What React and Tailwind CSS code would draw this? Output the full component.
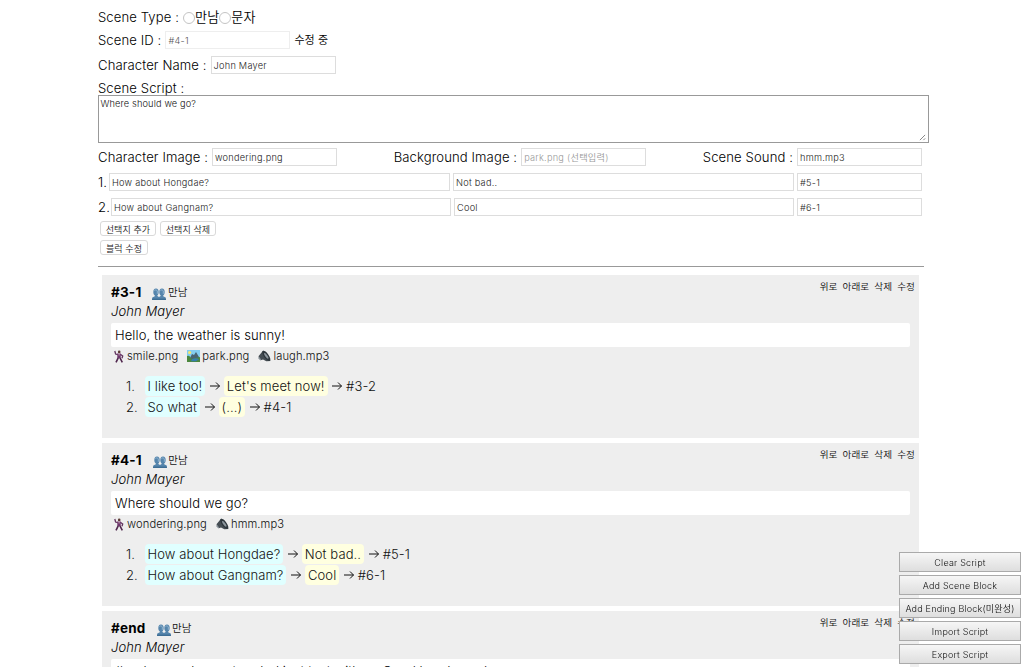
const F = "font-['Inter','Noto_Sans_CJK_KR',sans-serif]";

function Field({ value, className = 'w-[125px]', tone = 'text-[#222] border-[#ddd]' }) {
  return (
    <span className={`flex h-[18px] shrink-0 items-center whitespace-nowrap border bg-white px-[2px] pt-[2px] text-[9.2px] leading-[14px] tracking-[0.25px] ${tone} ${className}`}>
      {value}
    </span>
  );
}

function Radio() {
  return <span className="mt-[3px] size-[12px] shrink-0 rounded-full border border-[#c4c4c4] bg-white" />;
}

function SmallButton({ children, className }) {
  return (
    <button className={`h-[15px] rounded-[3px] border border-[#d9d9d9] bg-white pt-px text-[9px] leading-[13px] text-[#222] ${className}`}>
      {children}
    </button>
  );
}

function People() {
  return (
    <svg viewBox="0 0 14 12" className="mt-[3px] h-[12px] w-[14px]">
      <g fill="#5585ac">
        <ellipse cx="4" cy="4" rx="2.7" ry="3.6" />
        <ellipse cx="10" cy="4" rx="2.7" ry="3.6" />
        <path d="M2.8 6h2.6v2.1L7 9l1.6-.9V6h2.6v2.2l2.5 1.2.3 2.6H0l.3-2.6 2.5-1.2z" />
      </g>
      <path d="M2.4 2.5Q4 .8 5.3 2.8v3M8.5 2.5q1.5-1.7 2.8.3v3" stroke="#8eb3d0" strokeWidth="1" fill="none" />
      <path d="M0 11.2h14" stroke="#34658c" />
    </svg>
  );
}

function Dancer() {
  return (
    <svg viewBox="0 0 10 13" className="mr-px h-[13px] w-[10px]">
      <circle cx="5.2" cy="1.9" r="1.3" fill="#5b3b33" />
      <path d="M.8 1 1.6 4l2.3.7M6.3 4.3 8.7 6 8 8.3" stroke="#62355f" strokeWidth="1.3" fill="none" />
      <path d="M3.2 3.5h3.7l-.3 4.7H3.4z" fill="#70386e" />
      <path d="M4.2 7.8 2 12.3M6 7.8 8.3 12.3" stroke="#51284f" strokeWidth="1.6" />
      <path d="M5.1 3.5v2" stroke="#ead4d5" strokeWidth=".7" />
    </svg>
  );
}

function Landscape() {
  return (
    <svg viewBox="0 0 13 12" className="h-[12px] w-[13px]">
      <path fill="#83cdf0" d="M0 0h13v12H0z" />
      <circle cx="2.6" cy="2.5" r="1.6" fill="#f8e66c" />
      <path d="m3 8 2-4 2 1 2-3 3 5v3H3z" fill="#4a6472" />
      <path d="M0 6q3-1 4 3l9-2v5H0z" fill="#4c873e" />
      <path d="M5 9.2q4-2 7 0l-3 2H4z" fill="#347eaf" />
    </svg>
  );
}

function Speaker() {
  return (
    <svg viewBox="0 0 13 12" className="h-[12px] w-[13px]">
      <path d="M.5 6.2 5.2.6 9 5l3.6 6-4.2.2L5 9.5l-2.3.7z" fill="#454d53" />
      <ellipse cx="8.3" cy="5.8" rx="2.4" ry="6" transform="rotate(-36 8.3 5.8)" fill="#2e363c" />
      <ellipse cx="8.3" cy="5.8" rx="1.1" ry="3.4" transform="rotate(-36 8.3 5.8)" fill="#8c969d" />
      <path d="m.5 6.4 2.6 2.8-.6 1.4L.3 8.6z" fill="#89939a" />
    </svg>
  );
}

function Arrow() {
  return (
    <svg viewBox="0 0 12 12" className="h-[12px] w-[12px] shrink-0" fill="none" stroke="#111" strokeWidth="1">
      <path d="M1 6h9.5M7 2.5 10.5 6 7 9.5" />
    </svg>
  );
}

const scenes = [
  {
    id: '#3-1', script: 'Hello, the weather is sunny!',
    files: [[Dancer, 'smile.png'], [Landscape, 'park.png'], [Speaker, 'laugh.mp3']],
    options: [['I like too!', "Let's meet now!", '#3-2'], ['So what', '(...)', '#4-1']],
  },
  {
    id: '#4-1', script: 'Where should we go?',
    files: [[Dancer, 'wondering.png'], [Speaker, 'hmm.mp3']],
    options: [['How about Hongdae?', 'Not bad..', '#5-1'], ['How about Gangnam?', 'Cool', '#6-1']],
  },
  { id: '#end', script: '#end scene has not ended just text with an Good bye (name)', files: [], options: [] },
];

function Scene({ scene }) {
  return (
    <article className="relative h-[163px] shrink-0 bg-[#eee] px-[9px] pt-[7px]">
      <div className="absolute right-[4px] top-[4px] flex gap-[5px] text-[9.6px] leading-[15px] text-[#111]">
        <span>위로</span><span>아래로</span><span>삭제</span><span>수정</span>
      </div>
      <header className="flex h-[20px] items-center">
        <b className="text-[13.5px] font-bold tracking-[0.2px]">{scene.id}</b>
        <span className="ml-[11px]"><People /></span>
        <span className="ml-[1.5px] mt-[1px] text-[10.5px] text-[#111]">만남</span>
      </header>
      <div className="h-[20px] text-[13px] italic leading-[19px]">John Mayer</div>
      <div className="mt-px flex h-[24px] items-center whitespace-nowrap rounded-[2px] bg-white px-[4px] text-[13px]">{scene.script}</div>
      <div className="flex h-[18px] items-center gap-[9px] pl-[3px] text-[11.2px] text-[#111]">
        {scene.files.map(([Icon, name]) => (
          <span key={name} className="flex items-center gap-[2px]"><Icon />{name}</span>
        ))}
      </div>
      <ol className="mt-[11px] pl-[15px] text-[13px] text-[#111]">
        {scene.options.map(([option, reply, target], i) => (
          <li key={option} className="flex h-[20.5px] items-center whitespace-nowrap">
            <span className="w-[18.5px]">{i + 1}.</span>
            <span className="rounded-[4px] bg-[#e0ffff] px-[3px] leading-[20px]">{option}</span>
            <span className="ml-[3.5px] mr-[3px]"><Arrow /></span>
            <span className="rounded-[4px] bg-[#ffffe0] px-[3px] leading-[20px]">{reply}</span>
            <span className="ml-[3.5px] mr-[3px]"><Arrow /></span>
            <span>{target}</span>
          </li>
        ))}
      </ol>
    </article>
  );
}

export default function App() {
  return (
    <div className={`h-[667px] w-[1024px] overflow-hidden bg-white pl-[98px] text-[13.1px] font-[350] leading-[18px] tracking-[0.1px] text-black ${F}`}>
      <form className="h-[266px]">
        <div className="flex h-[31px] items-center pt-[2px]">
          <span className="mr-[4px]">Scene Type :</span><Radio />만남<Radio />문자
        </div>
        <div className="flex h-[18px] items-center">
          <span className="mr-[4px]">Scene ID :</span>
          <Field value="#4-1" tone="text-[#555] border-[#eee]" />
          <span className="ml-[4px] text-[11px]">수정 중</span>
        </div>
        <div className="mt-[7px] flex h-[18px] items-center">
          <span className="mr-[4px]">Character Name :</span><Field value="John Mayer" />
        </div>
        <div className="mt-[5px] h-[16px]">Scene Script :</div>
        <div className="flex h-[48px] w-[831px] items-end border border-[#999] pl-[1.5px] pr-[2px]">
          <span className="flex-1 self-start text-[9.2px] leading-[15px] tracking-[0.15px] text-[#111]">Where should we go?</span>
          <svg viewBox="0 0 8 8" className="mb-px size-[7px]" stroke="#777"><path d="M1 7 7 1M5 7l2-2" /></svg>
        </div>
        <div className="mt-[5px] flex h-[18px] w-[824px] items-center justify-between">
          <span className="flex items-center gap-[4px]">Character Image : <Field value="wondering.png" /></span>
          <span className="flex items-center gap-[4px]">Background Image : <Field value="park.png (선택입력)" tone="text-[#999] border-[#ddd]" /></span>
          <span className="flex items-center gap-[4px]">Scene Sound : <Field value="hmm.mp3" /></span>
        </div>
        <div className="mt-[7px] flex h-[18px] w-[824px] items-center gap-[3px]">
          <span className="w-[8px] whitespace-nowrap">1.</span>
          <Field value="How about Hongdae?" className="w-[341px]" /><Field value="Not bad.." className="w-[341px]" /><Field value="#5-1" />
        </div>
        <div className="mt-[7px] flex h-[18px] w-[824px] items-center gap-[3px]">
          <span className="w-[10px] whitespace-nowrap">2.</span>
          <Field value="How about Gangnam?" className="w-[340px]" /><Field value="Cool" className="w-[340px]" /><Field value="#6-1" />
        </div>
        <div className="ml-[2px] mt-[5px] flex gap-[4px]">
          <SmallButton className="w-[56px]">선택지 추가</SmallButton><SmallButton className="w-[56px]">선택지 삭제</SmallButton>
        </div>
        <div className="ml-[2px] mt-[4px] flex"><SmallButton className="w-[48px]">블럭 수정</SmallButton></div>
      </form>
      <hr className="w-[826px] border-t border-[#999]" />
      <main className="ml-[4px] mt-[8px] flex w-[817px] flex-col gap-[5px]">
        {scenes.map((scene) => <Scene key={scene.id} scene={scene} />)}
      </main>
      <nav className="fixed left-[899px] top-[552px] flex w-[122px] flex-col gap-[3px]">
        {['Clear Script', 'Add Scene Block', 'Add Ending Block(미완성)', 'Import Script', 'Export Script'].map((label) => (
          <button key={label} className="flex h-[20px] items-center justify-center whitespace-nowrap border border-[#aaa] bg-linear-to-b from-[#f6f6f6] to-[#dedede] pt-[2px] text-[9px] leading-[16px] tracking-[0.2px] text-[#111]">{label}</button>
        ))}
      </nav>
    </div>
  );
}
